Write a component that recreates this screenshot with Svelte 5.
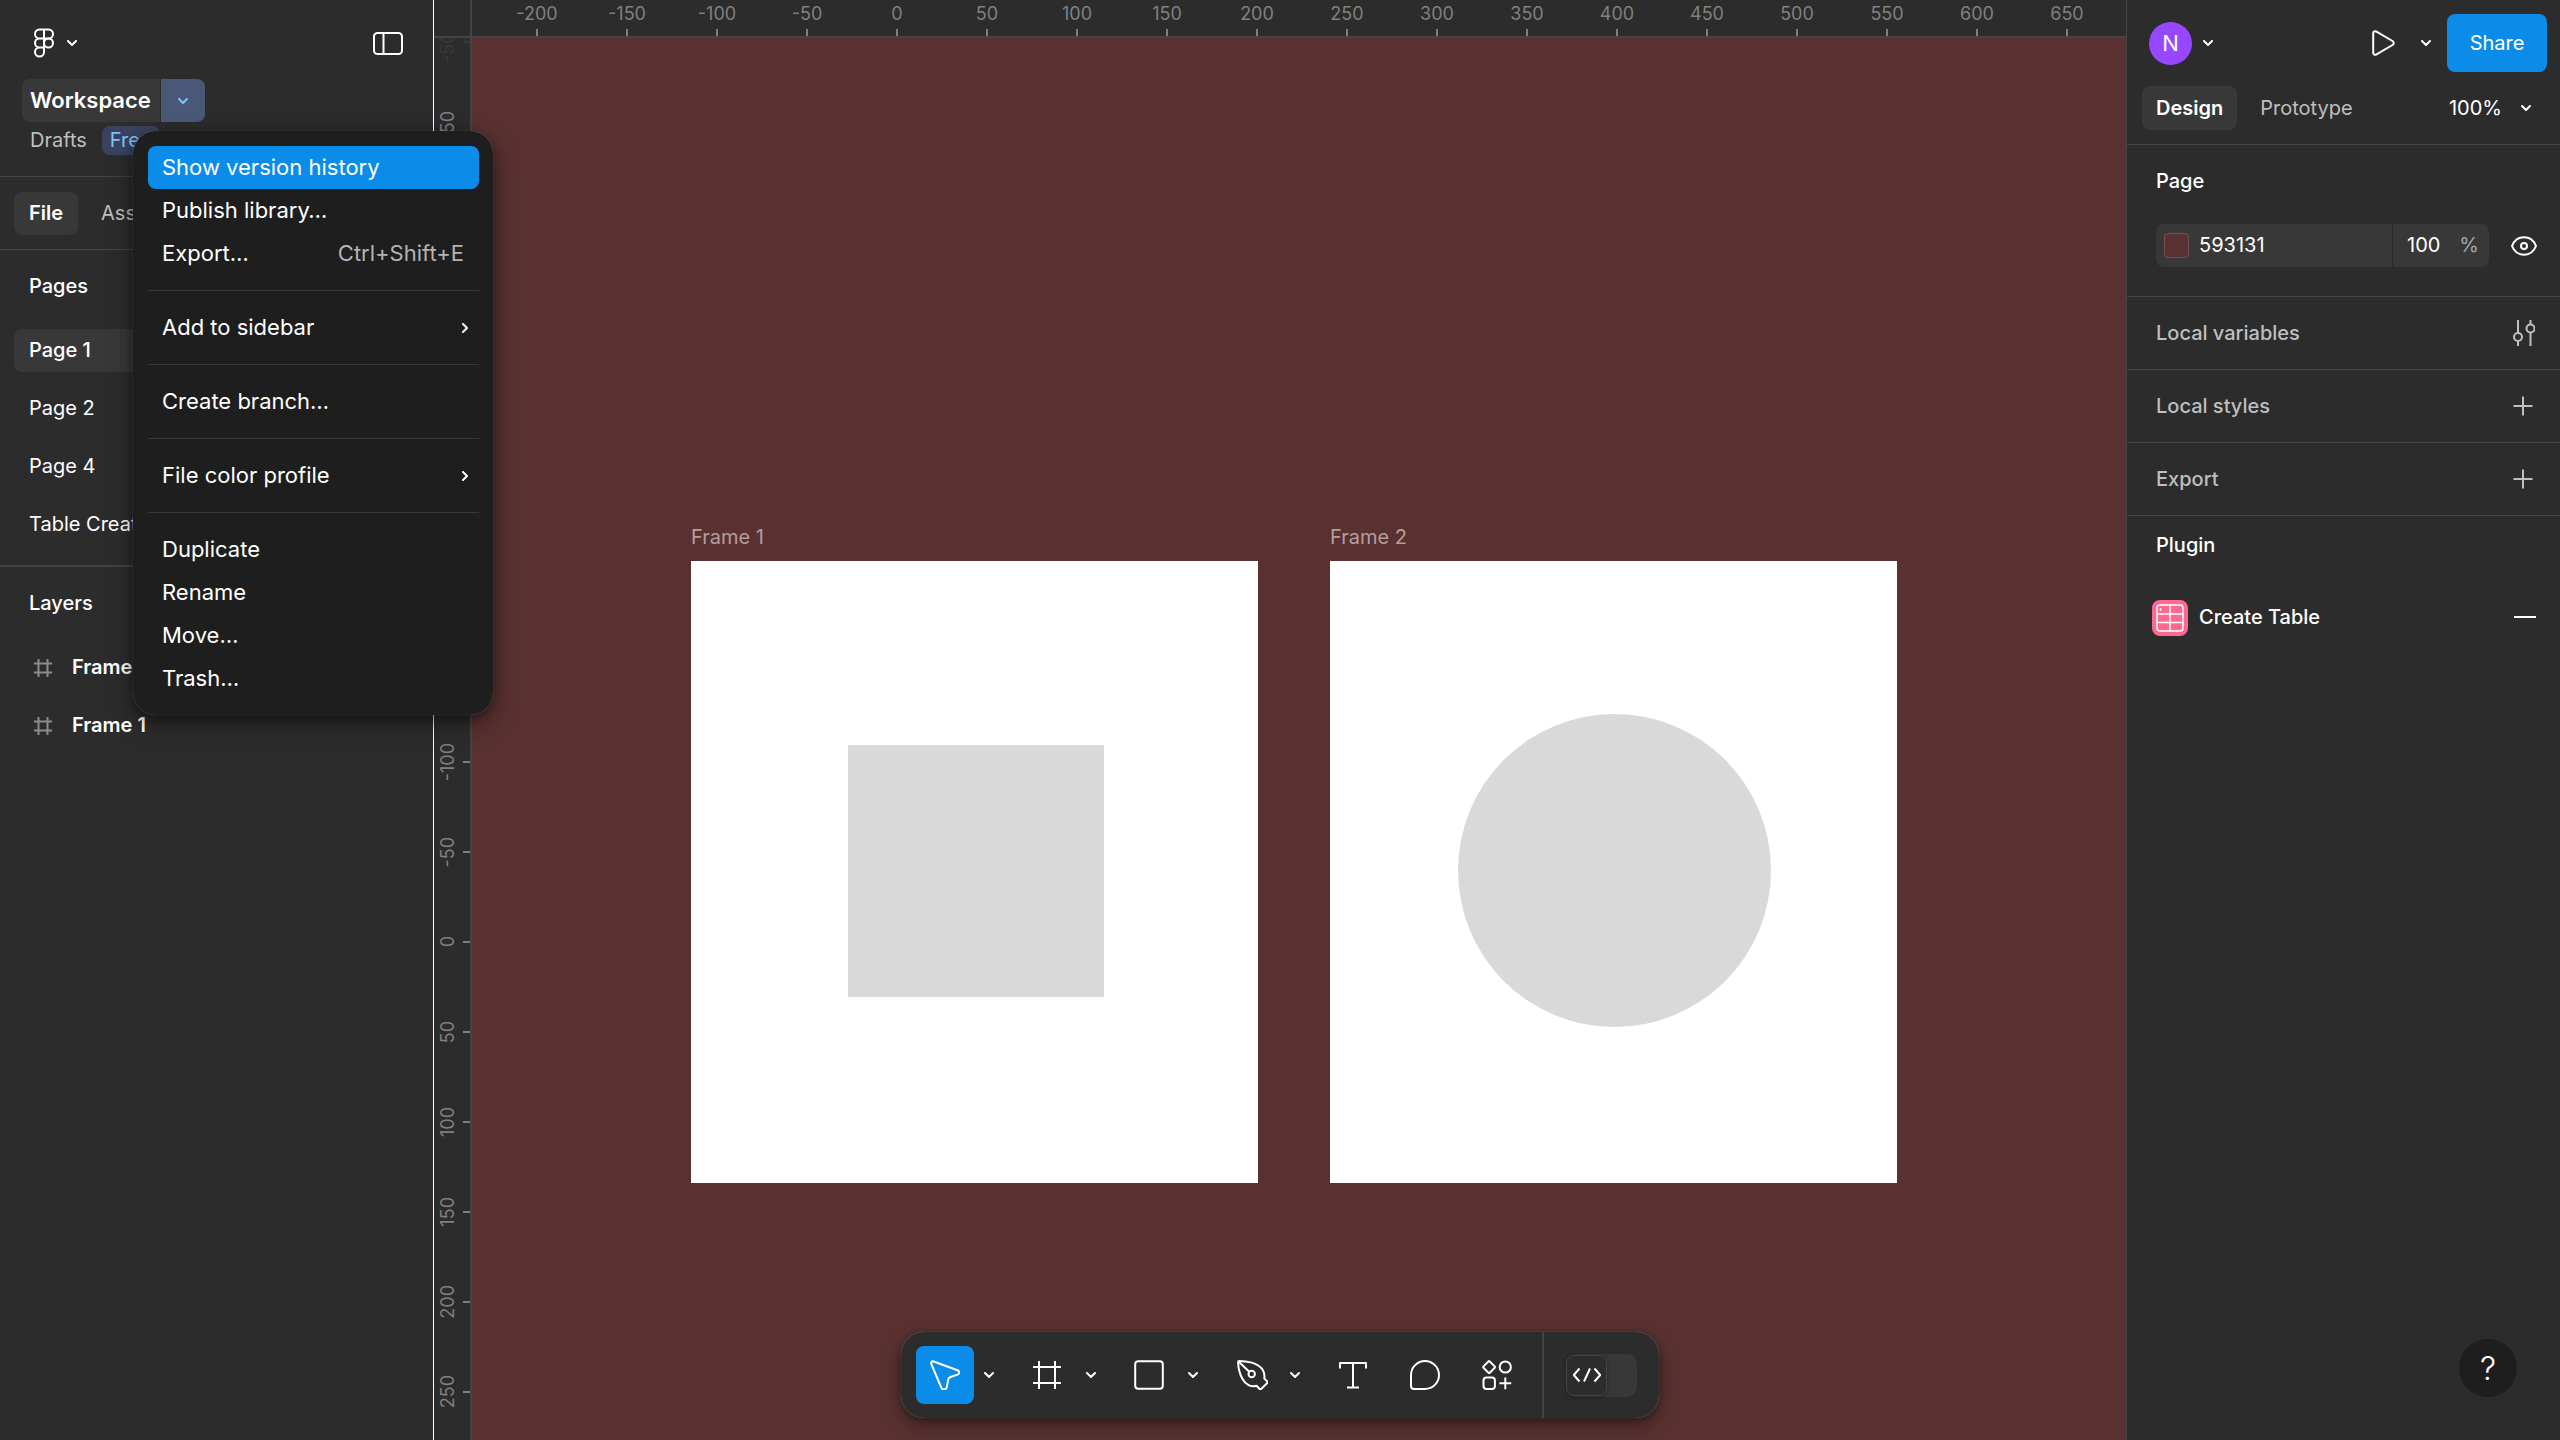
<script lang="ts">
  type MenuItem = { label: string; shortcut?: string; submenu?: boolean; active?: boolean };

  const xTicks = Array.from({ length: 18 }, (_, i) => -200 + i * 50);
  const yTicks = Array.from({ length: 16 }, (_, i) => -500 + i * 50);

  const pages = ['Page 1', 'Page 2', 'Page 4', 'Table Creator'];
  const layers = ['Frame 2', 'Frame 1'];

  const menuGroups: MenuItem[][] = [
    [
      { label: 'Show version history', active: true },
      { label: 'Publish library…' },
      { label: 'Export…', shortcut: 'Ctrl+Shift+E' },
    ],
    [{ label: 'Add to sidebar', submenu: true }],
    [{ label: 'Create branch…' }],
    [{ label: 'File color profile', submenu: true }],
    [{ label: 'Duplicate' }, { label: 'Rename' }, { label: 'Move…' }, { label: 'Trash…' }],
  ];

  let currentPage = $state('Page 1');
  let hex = $state('593131');
  let opacity = $state('100');
</script>

{#snippet chevron()}
  <svg class="chevron" width="10" height="6" viewBox="0 0 10 6" aria-hidden="true">
    <path d="M1 1l4 4 4-4" />
  </svg>
{/snippet}

{#snippet plus()}
  <svg width="20" height="20" viewBox="0 0 20 20" aria-hidden="true">
    <path d="M10 .5v19M.5 10h19" />
  </svg>
{/snippet}

<div class="editor">
  <aside class="left">
    <header class="file-header">
      <div class="top-row">
        <button type="button" class="logo" aria-label="Main menu">
          <svg width="20" height="30" viewBox="0 0 20 29" aria-hidden="true">
            <path d="M10 1H5.5a4.5 4.5 0 0 0 0 9H10zM10 1h4.5a4.5 4.5 0 0 1 0 9H10zM10 10H5.5a4.5 4.5 0 0 0 0 9H10zM10 19H5.5a4.5 4.5 0 1 0 4.5 4.5z" />
            <circle cx="14.5" cy="14.5" r="4.5" />
          </svg>
          {@render chevron()}
        </button>
        <button type="button" aria-label="Minimize UI">
          <svg width="30" height="23" viewBox="0 0 30 23" aria-hidden="true">
            <rect x="1" y="1" width="28" height="21" rx="3.5" />
            <path d="M10.5 1v21" />
          </svg>
        </button>
      </div>

      <div class="title">
        <button type="button" class="file-name">Workspace</button>
        <button type="button" class="file-toggle" aria-label="File options" aria-expanded="true">
          {@render chevron()}
        </button>

        <div class="menu" role="menu">
          {#each menuGroups as group, i}
            {#if i > 0}<hr />{/if}
            {#each group as item}
              <button type="button" role="menuitem" class:active={item.active}>
                {item.label}
                {#if item.shortcut}<span class="shortcut">{item.shortcut}</span>{/if}
                {#if item.submenu}
                  <svg class="chevron" width="6" height="10" viewBox="0 0 6 10" aria-hidden="true">
                    <path d="M1 1l4 4-4 4" />
                  </svg>
                {/if}
              </button>
            {/each}
          {/each}
        </div>
      </div>

      <div class="location">
        <a href="#drafts">Drafts</a>
        <span class="badge">Free</span>
      </div>
    </header>

    <nav class="tabs">
      <button type="button" class="tab selected">File</button>
      <button type="button" class="tab">Assets</button>
    </nav>

    <section class="pages">
      <h2>Pages</h2>
      <ul>
        {#each pages as page}
          <li>
            <button type="button" class="row" class:selected={page === currentPage} onclick={() => (currentPage = page)}>
              {page}
            </button>
          </li>
        {/each}
      </ul>
    </section>

    <section class="layers">
      <h2>Layers</h2>
      <ul>
        {#each layers as layer}
          <li>
            <button type="button" class="row layer">
              <svg width="18" height="18" viewBox="0 0 18 18" aria-hidden="true">
                <path d="M4.5 0v18M13.5 0v18M0 4.5h18M0 13.5h18" />
              </svg>
              {layer}
            </button>
          </li>
        {/each}
      </ul>
    </section>
  </aside>

  <div class="corner"></div>
  <div class="ruler-x">
    {#each xTicks as tick}
      <span class="tick"><span>{tick}</span></span>
    {/each}
  </div>
  <div class="ruler-y">
    <div class="scale">
      {#each yTicks as tick}
        <span class="tick" class:dim={tick === -500}><span>{tick}</span></span>
      {/each}
    </div>
  </div>

  <main class="canvas">
    <div class="frame frame-1">
      <span class="frame-name">Frame 1</span>
      <div class="square"></div>
    </div>
    <div class="frame frame-2">
      <span class="frame-name">Frame 2</span>
      <div class="circle"></div>
    </div>
  </main>

  <aside class="right">
    <header class="share-header">
      <div class="share-row">
        <button type="button" class="account">
          <span class="avatar">N</span>
          {@render chevron()}
        </button>
        <button type="button" class="present" aria-label="Present">
          <svg width="23" height="26" viewBox="0 0 23 26" aria-hidden="true">
            <path d="M1.2 3.4v19.2c0 1.9 1.7 2.7 3.3 1.8l16-9.400c1.700-1 1.700-3 0-4L4.500 1.600C2.900.7 1.200 1.500 1.200 3.400z" />
          </svg>
        </button>
        <button type="button" class="present-options" aria-label="Present options">{@render chevron()}</button>
        <button type="button" class="share">Share</button>
      </div>
      <nav class="panel-tabs">
        <button type="button" class="tab selected">Design</button>
        <button type="button" class="tab">Prototype</button>
        <button type="button" class="zoom">100% {@render chevron()}</button>
      </nav>
    </header>

    <section class="page-props">
      <h2>Page</h2>
      <div class="fill-row">
        <div class="fill">
          <span class="swatch"></span>
          <input class="hex" aria-label="Page color" bind:value={hex} />
          <label class="opacity">
            <input aria-label="Opacity" bind:value={opacity} />
            <span>%</span>
          </label>
        </div>
        <button type="button" aria-label="Toggle visibility">
          <svg width="26" height="20" viewBox="0 0 26 20" aria-hidden="true">
            <path d="M1 10c2.2-5.600 6.800-8.700 12-8.700S22.800 4.400 25 10c-2.200 5.600-6.800 8.700-12 8.700S3.200 15.600 1 10z" />
            <circle cx="13" cy="10" r="3" />
          </svg>
        </button>
      </div>
    </section>

    <section class="prop">
      <h2>Local variables</h2>
      <button type="button" aria-label="Open variables">
        <svg width="22" height="26" viewBox="0 0 22 26" aria-hidden="true">
          <path d="M5 0v13M5 21v5M17.5 0v4.5M17.5 12.5V26" />
          <circle cx="5" cy="17" r="4" />
          <circle cx="17.5" cy="8.5" r="4" />
        </svg>
      </button>
    </section>
    <section class="prop">
      <h2>Local styles</h2>
      <button type="button" class="add" aria-label="Create style">{@render plus()}</button>
    </section>
    <section class="prop">
      <h2>Export</h2>
      <button type="button" class="add" aria-label="Add export">{@render plus()}</button>
    </section>

    <section class="plugin">
      <h2>Plugin</h2>
      <div class="plugin-row">
        <svg class="plugin-icon" width="36" height="36" viewBox="0 0 36 36" aria-hidden="true">
          <rect class="plugin-bg" width="36" height="36" rx="8" />
          <rect x="5" y="5" width="26" height="26" rx="3" />
          <path d="M18 5v26M5 14h26M5 22.5h26M8.5 8v3" />
        </svg>
        <button type="button" class="plugin-name">Create Table</button>
        <button type="button" aria-label="Remove plugin">
          <svg width="22" height="20" viewBox="0 0 22 20" aria-hidden="true"><path d="M0 9h22" /></svg>
        </button>
      </div>
    </section>
  </aside>

  <div class="toolbar" role="toolbar">
    <div class="tool-group">
      <button type="button" class="tool active" aria-label="Move">
        <svg width="30" height="30" viewBox="0 0 30 30" aria-hidden="true">
          <path d="M3.7 1.5 27.5 10.3c2.3.9 2.3 3.5 0 4.3l-7 2.4c-1.3.4-2.1 1.2-2.3 2.5l-1.400 7.600c-.6 2.900-4.300 3.200-5.500.5L1.300 4C.7 2.200 2 .9 3.700 1.500z" />
        </svg>
      </button>
      <button type="button" class="more" aria-label="Move tools">{@render chevron()}</button>
    </div>
    <div class="tool-group">
      <button type="button" class="tool" aria-label="Frame">
        <svg width="30" height="30" viewBox="0 0 30 30" aria-hidden="true">
          <path d="M7 1v28M23 1v28M1 7h28M1 23h28" />
        </svg>
      </button>
      <button type="button" class="more" aria-label="Region tools">{@render chevron()}</button>
    </div>
    <div class="tool-group">
      <button type="button" class="tool" aria-label="Rectangle">
        <svg width="30" height="30" viewBox="0 0 30 30" aria-hidden="true">
          <rect x="1.2" y="1.2" width="27.6" height="27.6" rx="3" />
        </svg>
      </button>
      <button type="button" class="more" aria-label="Shape tools">{@render chevron()}</button>
    </div>
    <div class="tool-group">
      <button type="button" class="tool" aria-label="Pen">
        <svg width="34" height="30" viewBox="0 0 34 30" aria-hidden="true">
          <path d="M5.2 1C14 1.2 20 2.5 25 6c4.200 3 6 7.500 5.300 12.500l3 3c.5.5.5 1 0 1.500l-6.200 6c-.5.5-1 .5-1.500 0l-3-3.200C17 27.500 11.500 24.500 8.500 19 6 14.500 4.300 8.500 4.100 2.100 4.100 1.400 4.500 1 5.200 1z" />
          <path d="M4.5 1.5l11 10.500" />
          <circle cx="17.7" cy="14" r="3.2" />
        </svg>
      </button>
      <button type="button" class="more" aria-label="Drawing tools">{@render chevron()}</button>
    </div>
    <button type="button" class="tool" aria-label="Text">
      <svg width="28" height="30" viewBox="0 0 28 30" aria-hidden="true">
        <path d="M1 8.5V3h26v5.5M14 3v24.5M8 27.5h12" />
      </svg>
    </button>
    <button type="button" class="tool" aria-label="Comment">
      <svg width="30" height="30" viewBox="0 0 30 30" aria-hidden="true">
        <path d="M15 1a14 14 0 0 1 0 28H4a3 3 0 0 1-3-3V15A14 14 0 0 1 15 1z" />
      </svg>
    </button>
    <button type="button" class="tool" aria-label="Actions">
      <svg width="30" height="30" viewBox="0 0 30 30" aria-hidden="true">
        <path d="M6.4 1.5 1.5 6.4c-.5.5-.5.9 0 1.4l4.9 4.9c.5.5.9.5 1.4 0l4.900-4.900c.5-.5.5-.9 0-1.400L7.800 1.500c-.5-.5-.9-.5-1.400 0z" />
        <circle cx="23.3" cy="7" r="5.6" />
        <rect x="1.5" y="17.5" width="11.4" height="11.4" rx="3" />
        <path d="M23.3 17.4v11.8M17.4 23.3h11.8" />
      </svg>
    </button>
    <div class="dev">
      <button type="button" class="dev-toggle" role="switch" aria-checked="false" aria-label="Dev Mode">
        <span class="thumb">
          <svg width="28" height="16" viewBox="0 0 28 16" aria-hidden="true">
            <path d="M6.5 1.5.8 8l5.7 6.5M21.5 1.5 27.2 8l-5.7 6.5M17 1.5l-6 13" />
          </svg>
        </span>
      </button>
    </div>
  </div>

  <button type="button" class="help" aria-label="Help and resources">?</button>
</div>

<style>
  :global(body) {
    background: #2c2c2c;
  }
  .editor {
    --panel: #2c2c2c;
    --line: #444;
    --hover: #383838;
    --blue: #0c8ce9;
    --muted: #bfbfbf;
    position: relative;
    display: grid;
    grid-template-columns: 434px 38px minmax(0, 1fr) 434px;
    grid-template-rows: 38px minmax(0, 1fr);
    height: 100vh;
    overflow: hidden;
    background: var(--panel);
    color: #fff;
    font-family: Inter, "Liberation Sans", sans-serif;
    font-size: 20px;
    line-height: 29px;
  }
  button, input {
    margin: 0;
    padding: 0;
    border: 0;
    background: none;
    color: inherit;
    font: inherit;
  }
  button {
    display: flex;
    align-items: center;
    cursor: pointer;
  }
  svg {
    display: block;
    flex: none;
    fill: none;
    stroke: currentColor;
    stroke-width: 2;
    stroke-linejoin: round;
  }
  .chevron {
    stroke-linecap: round;
  }
  h2 {
    display: flex;
    align-items: center;
    height: 72px;
    margin: 0;
    font-size: 20px;
    font-weight: 500;
  }
  ul {
    display: flex;
    flex-direction: column;
    gap: 15px;
    margin: 0;
    padding: 7px 14px 0;
    list-style: none;
  }

  /* left panel */
  .left {
    position: relative;
    z-index: 2;
    grid-row: 1 / 3;
    border-right: 1px solid #fff;
  }
  .file-header {
    padding: 14px 0 21px;
    border-bottom: 1px solid var(--line);
  }
  .top-row {
    display: flex;
    justify-content: space-between;
    height: 58px;
    padding: 0 30px 0 34px;
  }
  .logo {
    gap: 13px;
  }
  .title {
    position: relative;
    display: flex;
    gap: 1px;
    height: 43px;
    margin: 7px 22px 4px;
  }
  .file-name {
    padding: 0 9px 0 8px;
    border-radius: 8px 0 0 8px;
    background: var(--hover);
    font-size: 22px;
    font-weight: 600;
  }
  .file-toggle {
    justify-content: center;
    width: 44px;
    border-radius: 0 8px 8px 0;
    background: #4a5878;
    color: #7cc4f8;
  }
  .location {
    display: flex;
    gap: 15px;
    padding-left: 30px;
  }
  .location a {
    color: var(--muted);
    text-decoration: none;
  }
  .badge {
    padding: 0 8px;
    border-radius: 8px;
    background: #394360;
    color: #7cc4f8;
  }
  .tabs {
    display: flex;
    gap: 8px;
    padding: 15px 14px 14px;
    border-bottom: 1px solid var(--line);
  }
  .tab {
    height: 43px;
    padding: 0 14px;
    border-radius: 8px;
    color: var(--muted);
  }
  .tab.selected {
    background: var(--hover);
    color: #fff;
    font-weight: 600;
  }
  .tabs .tab {
    padding: 0 15px;
  }
  .left h2 {
    padding-left: 29px;
  }
  .pages {
    padding-bottom: 19px;
    border-bottom: 2px solid var(--line);
  }
  .row {
    width: 100%;
    height: 43px;
    padding: 0 15px;
    border-radius: 8px;
  }
  .row.selected {
    background: var(--hover);
    font-weight: 500;
  }
  .layer {
    gap: 20px;
    padding-left: 20px;
    font-weight: 600;
  }
  .layer svg {
    color: #8c8c8c;
  }

  /* file menu */
  .menu {
    position: absolute;
    top: 52px;
    left: 111px;
    width: 331px;
    padding: 15px 14px 15px 15px;
    border-radius: 23px;
    background: #1e1e1e;
    box-shadow: 0 0 1px rgba(255, 255, 255, 0.4), 0 4px 12px rgba(0, 0, 0, 0.4), 0 10px 28px rgba(0, 0, 0, 0.3);
    font-size: 22px;
  }
  .menu button {
    justify-content: space-between;
    width: 100%;
    height: 43px;
    padding: 0 15px 0 14px;
    border-radius: 8px;
  }
  .menu button.active {
    background: var(--blue);
  }
  .menu hr {
    height: 1px;
    margin: 15px 0;
    border: 0;
    background: #383838;
  }
  .menu .chevron {
    margin-right: -4px;
  }
  .shortcut {
    color: #b3b3b3;
  }

  /* rulers */
  .corner {
    z-index: 1;
    grid-area: 1 / 2;
    border-right: 2px solid var(--line);
    border-bottom: 2px solid var(--line);
    background: var(--panel);
  }
  .ruler-x, .ruler-y {
    overflow: hidden;
    color: #808080;
    font-size: 18px;
    line-height: 28px;
  }
  .ruler-x {
    grid-area: 1 / 3;
    display: flex;
    padding-left: 20px;
    border-bottom: 2px solid var(--line);
  }
  .ruler-y {
    grid-area: 1 / 2 / 3 / 3;
    border-right: 2px solid var(--line);
  }
  .scale {
    margin-top: -3px;
  }
  .tick {
    display: flex;
    justify-content: space-between;
    align-items: center;
  }
  .ruler-x .tick {
    flex: 0 0 90px;
    flex-direction: column;
  }
  .ruler-y .tick {
    height: 90px;
  }
  .tick::after {
    content: '';
    background: #808080;
  }
  .ruler-x .tick::after {
    width: 2px;
    height: 7px;
  }
  .ruler-y .tick::after {
    width: 7px;
    height: 2px;
  }
  .ruler-y .tick span {
    writing-mode: vertical-rl;
    transform: rotate(180deg);
  }
  .tick.dim {
    color: #383838;
  }
  .tick.dim::after {
    background: #383838;
  }

  /* canvas */
  .canvas {
    position: relative;
    grid-area: 2 / 3;
    overflow: hidden;
    background: #593131;
  }
  .frame {
    position: absolute;
    top: 523px;
    width: 567px;
    height: 622px;
    background: #fff;
  }
  .frame-1 { left: 219px; }
  .frame-2 { left: 858px; }
  .frame-name {
    position: absolute;
    bottom: 100%;
    left: 0;
    padding-bottom: 9px;
    color: #b69d9d;
  }
  .square {
    position: absolute;
    top: 184px;
    left: 157px;
    width: 256px;
    height: 252px;
    background: #d9d9d9;
  }
  .circle {
    position: absolute;
    top: 153px;
    left: 128px;
    width: 313px;
    height: 313px;
    border-radius: 50%;
    background: #d9d9d9;
  }

  /* right panel */
  .right {
    grid-area: 1 / 4 / 3 / 5;
    border-left: 1px solid var(--line);
  }
  .share-header {
    padding: 14px 0;
    border-bottom: 1px solid var(--line);
  }
  .share-row {
    display: flex;
    padding: 0 13px 0 22px;
    margin-bottom: 14px;
  }
  .account {
    gap: 11px;
    margin-right: auto;
  }
  .avatar {
    display: grid;
    place-items: center;
    width: 43px;
    height: 43px;
    border-radius: 50%;
    background: #9747ff;
    font-size: 22px;
  }
  .present-options {
    padding: 0 16px 0 26px;
  }
  .share {
    justify-content: center;
    width: 100px;
    height: 58px;
    border-radius: 8px;
    background: var(--blue);
  }
  .panel-tabs {
    display: flex;
    gap: 9px;
    height: 44px;
    padding: 0 29px 0 15px;
  }
  .panel-tabs .tab {
    height: 44px;
  }
  .zoom {
    gap: 19px;
    margin-left: auto;
  }
  .right h2 {
    padding-left: 29px;
  }
  .page-props {
    padding-bottom: 29px;
    border-bottom: 1px solid var(--line);
  }
  .fill-row {
    display: flex;
    justify-content: space-between;
    padding: 7px 23px 0 29px;
  }
  .fill {
    display: flex;
    align-items: center;
    width: 333px;
    height: 43px;
    border-radius: 8px;
    background: var(--hover);
  }
  .swatch {
    flex: none;
    box-sizing: border-box;
    width: 25px;
    height: 25px;
    margin: 0 10px 0 8px;
    border: 1px solid #745252;
    border-radius: 4px;
    background: #593131;
  }
  .hex {
    flex: 1;
    min-width: 0;
  }
  .opacity {
    display: flex;
    align-items: center;
    justify-content: space-between;
    box-sizing: border-box;
    width: 97px;
    height: 43px;
    padding: 0 10px 0 14px;
    border-left: 1px solid var(--panel);
    color: #a6a6a6;
  }
  .opacity input {
    width: 48px;
    color: #fff;
  }
  .prop {
    display: flex;
    justify-content: space-between;
    padding-right: 25px;
    border-bottom: 1px solid var(--line);
    color: var(--muted);
  }
  .add {
    padding-right: 2px;
  }
  .plugin h2 {
    height: 58px;
  }
  .plugin-row {
    display: flex;
    align-items: center;
    gap: 11px;
    height: 43px;
    margin-top: 22px;
    padding: 0 24px 0 25px;
  }
  .plugin-icon {
    stroke-width: 1.5;
  }
  .plugin-bg {
    fill: #ff6890;
    stroke: none;
  }
  .plugin-name {
    margin-right: auto;
    font-weight: 500;
  }

  /* bottom toolbar */
  .toolbar {
    position: absolute;
    bottom: 22px;
    left: 50%;
    display: flex;
    align-items: center;
    gap: 14px;
    height: 86px;
    padding-left: 15px;
    border-radius: 23px;
    background: var(--panel);
    box-shadow: 0 0 1px rgba(255, 255, 255, 0.5), 0 2px 6px rgba(0, 0, 0, 0.4), 0 8px 20px rgba(0, 0, 0, 0.3);
    transform: translateX(-50%);
  }
  .tool-group {
    display: flex;
  }
  .tool {
    justify-content: center;
    width: 58px;
    height: 58px;
    border-radius: 8px;
  }
  .tool.active {
    background: var(--blue);
  }
  .more {
    justify-content: center;
    width: 30px;
  }
  .dev {
    display: flex;
    align-items: center;
    height: 100%;
    margin-left: 2px;
    padding: 0 22px;
    border-left: 2px solid var(--line);
  }
  .dev-toggle {
    width: 71px;
    height: 43px;
    border-radius: 10px;
    background: var(--hover);
  }
  .thumb {
    display: grid;
    place-items: center;
    box-sizing: border-box;
    width: 41px;
    height: 41px;
    border: 1px solid var(--line);
    border-radius: 8px;
    background: var(--panel);
    box-shadow: 0 1px 4px rgba(0, 0, 0, 0.3);
  }
  .help {
    position: absolute;
    right: 43px;
    bottom: 43px;
    justify-content: center;
    width: 58px;
    height: 58px;
    border-radius: 50%;
    background: #1e1e1e;
    font-size: 32px;
    font-weight: 300;
  }
</style>
